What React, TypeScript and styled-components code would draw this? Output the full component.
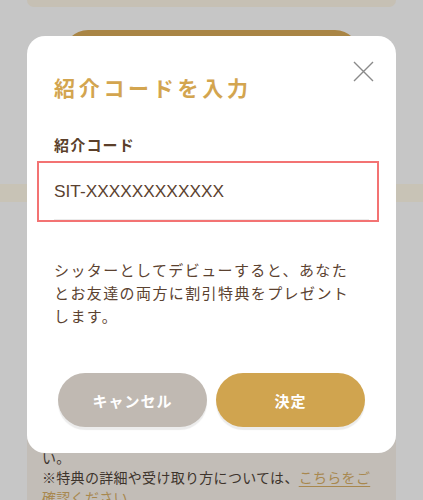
import * as React from 'react'
import styled, { createGlobalStyle } from 'styled-components'

const GlobalStyle = createGlobalStyle`
  html, body {
    margin: 0;
    padding: 0;
    background: #c6c6c6;
    font-family: "Noto Sans CJK JP", "Noto Sans", sans-serif;
  }
`

const Page = {
  Container: styled.div`
    width: 423px;
    height: 500px;
    overflow: hidden;
    background: #c6c6c6;
  `,
  TopCard: styled.div`
    height: 7px;
    margin: 0 27px;
    background: #c6c0b4;
    border-radius: 0 0 10px 10px;
  `,
  GoldButton: styled.div`
    height: 50px;
    margin: 23px 63px 0;
    background: #a98545;
    border-radius: 25px;
  `,
  Band: styled.div`
    height: 18px;
    margin-top: 104px;
    background: #c8c3b6;
  `,
  Card: styled.div`
    margin: 237px 27px 0;
    padding: 8px 15px 20px;
    background: #c2bdb7;
    color: #3d342c;
    font-size: 14px;
    line-height: 20px;
    letter-spacing: 0.3px;
  `,
  Line: styled.p`
    margin: 0;
  `,
  Link: styled.a`
    color: #a8884f;
    text-decoration: underline;
    text-underline-offset: 3px;
  `,
}

const Modal = {
  Overlay: styled.div`
    position: fixed;
    inset: 0;
    display: flex;
    justify-content: center;
    align-items: flex-start;
    padding-top: 36px;
  `,
  Dialog: styled.div`
    position: relative;
    box-sizing: border-box;
    width: 369px;
    padding: 36px 27px 26px;
    background: #ffffff;
    border-radius: 18px;
  `,
  Close: styled.button`
    position: absolute;
    top: 25px;
    left: 326px;
    width: 21px;
    height: 21px;
    padding: 0;
    border: none;
    background: none;
    cursor: pointer;
  `,
  Title: styled.h2`
    margin: 0;
    font-size: 21px;
    line-height: 31px;
    font-weight: 700;
    letter-spacing: 3.7px;
    color: #d3a54f;
  `,
  Label: styled.label`
    display: block;
    margin-top: 31px;
    font-size: 15px;
    line-height: 22px;
    font-weight: 700;
    letter-spacing: 1.2px;
    color: #5b3f2a;
  `,
  Field: styled.div`
    margin: 5px -10px 0 -17px;
    padding: 0 8px 0 15px;
    border: 2px solid #f37373;
  `,
  Input: styled.input`
    display: block;
    box-sizing: border-box;
    width: 100%;
    height: 57px;
    padding: 0;
    border: none;
    border-bottom: 1px solid #ebebeb;
    outline: none;
    font-family: "Liberation Sans", Arial, sans-serif;
    font-size: 17.3px;
    color: #5b4230;
    background: transparent;
  `,
  Text: styled.p`
    margin: 36px 10px 0 0;
    font-size: 15px;
    line-height: 23px;
    letter-spacing: 1.4px;
    color: #5b4230;
  `,
  Actions: styled.div`
    display: flex;
    justify-content: center;
    gap: 9px;
    margin-top: 46px;
  `,
  Button: styled.button<{ $primary?: boolean }>`
    width: 149px;
    height: 54px;
    border: none;
    border-radius: 27px;
    background: ${(p) => (p.$primary ? '#d0a44f' : '#c0b9b2')};
    box-shadow: 0 3px 1px #ececec;
    color: #ffffff;
    font-family: "Noto Sans CJK JP", sans-serif;
    font-size: 15px;
    font-weight: 700;
    letter-spacing: 1px;
    cursor: pointer;
  `,
}

const CloseIcon = () => (
  <svg width="21" height="21" viewBox="0 0 21 21">
    <path d="M1 1L20 20M20 1L1 20" stroke="#8a8a8a" strokeWidth="1.4" fill="none" />
  </svg>
)

const App = () => {
  const [code, setCode] = React.useState('SIT-XXXXXXXXXXXX')

  return (
    <>
      <GlobalStyle />
      <Page.Container>
        <Page.TopCard />
        <Page.GoldButton />
        <Page.Band />
        <Page.Card>
          <Page.Line>い。</Page.Line>
          <Page.Line>
            ※特典の詳細や受け取り方については、<Page.Link>こちらをご確認ください。</Page.Link>
          </Page.Line>
        </Page.Card>
      </Page.Container>

      <Modal.Overlay>
        <Modal.Dialog>
          <Modal.Close aria-label="閉じる">
            <CloseIcon />
          </Modal.Close>
          <Modal.Title>紹介コードを入力</Modal.Title>
          <Modal.Label htmlFor="referral-code">紹介コード</Modal.Label>
          <Modal.Field>
            <Modal.Input id="referral-code" value={code} onChange={(e) => setCode(e.target.value)} />
          </Modal.Field>
          <Modal.Text>
            シッターとしてデビューすると、あなたとお友達の両方に割引特典をプレゼントします。
          </Modal.Text>
          <Modal.Actions>
            <Modal.Button>キャンセル</Modal.Button>
            <Modal.Button $primary>決定</Modal.Button>
          </Modal.Actions>
        </Modal.Dialog>
      </Modal.Overlay>
    </>
  )
}

export default App
